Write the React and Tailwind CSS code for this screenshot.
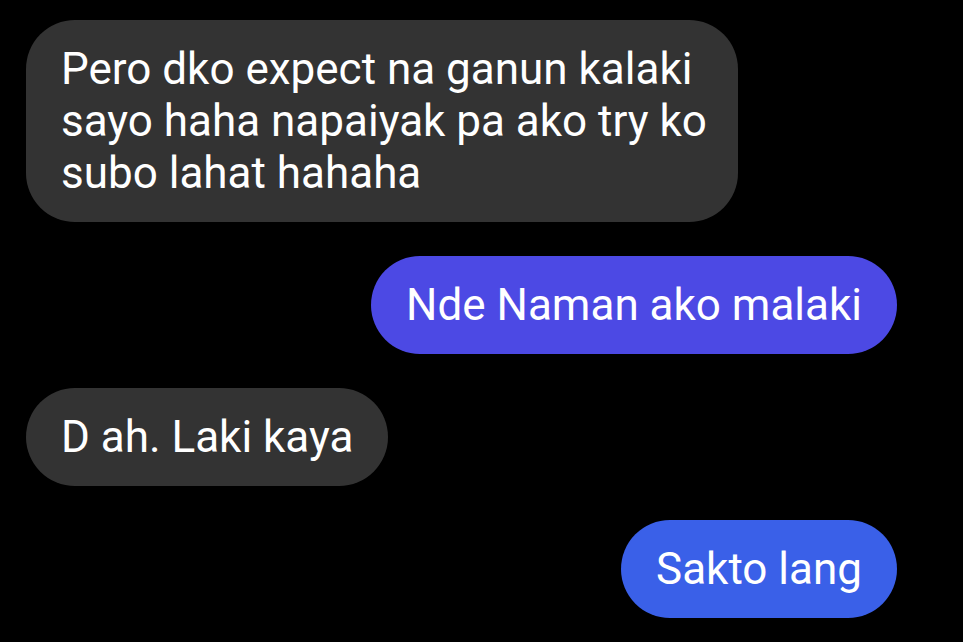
import React from "react";

const messages = [
  {
    id: 1,
    mine: false,
    lines: ["Pero dko expect na ganun kalaki", "sayo haha napaiyak pa ako try ko", "subo lahat hahaha"],
  },
  { id: 2, mine: true, lines: ["Nde Naman ako malaki"], color: "bg-[#4c49e4]" },
  { id: 3, mine: false, lines: ["D ah. Laki kaya"] },
  { id: 4, mine: true, lines: ["Sakto lang"], color: "bg-[#3a60e8]" },
];

const App = () => {
  return (
    <div
      className="w-[963px] h-[642px] bg-black overflow-hidden pt-[20px] pl-[26px] pr-[66px] flex flex-col gap-[34px]"
      style={{ fontFamily: "Roboto, 'Noto Sans', sans-serif" }}
    >
      {messages.map((m) => (
        <div key={m.id} className={`flex ${m.mine ? "justify-end" : "justify-start"}`}>
          <div
            className={`min-w-0 rounded-[49px] px-[35px] py-[23px] text-white text-[44px] leading-[52px] ${
              m.mine ? m.color : "bg-[#333333]"
            } ${m.lines.length > 1 ? "w-[712px]" : ""}`}
          >
            {m.lines.map((l, i) => (
              <div key={i} className="whitespace-nowrap">
                {l}
              </div>
            ))}
          </div>
        </div>
      ))}
    </div>
  );
};

export default App;
